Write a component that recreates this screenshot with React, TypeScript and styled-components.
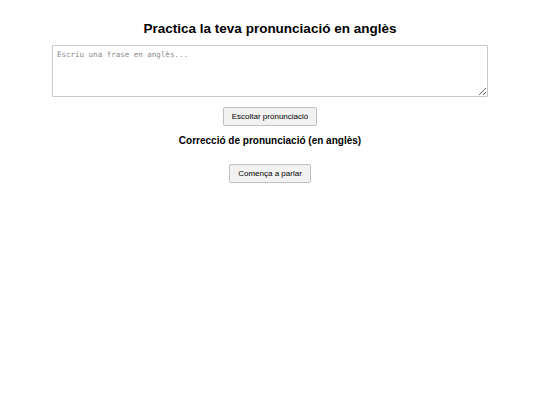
import React from 'react'
import styled, { createGlobalStyle } from 'styled-components'

const Global = createGlobalStyle`
  html, body {
    margin: 0;
    padding: 0;
    background: #fff;
  }
  body {
    font-family: "Liberation Sans", Arial, sans-serif;
    color: #000;
  }
`

const Page = styled.div`
  display: flex;
  flex-direction: column;
  align-items: center;
  padding-top: 20px;
`

const Title = styled.h1`
  margin: 0 0 8px;
  font-size: 13.5px;
  font-weight: 700;
  line-height: 17px;
`

const Input = styled.textarea`
  box-sizing: border-box;
  width: 436px;
  height: 52px;
  padding: 4px;
  border: 1px solid #c8c8c8;
  border-radius: 1px;
  font-family: "DejaVu Sans Mono", monospace;
  font-size: 7.5px;
  color: #000;
  outline: none;
  &::placeholder {
    color: #8a8a8a;
  }
`

const Button = styled.button<{ $top: number }>`
  margin-top: ${p => p.$top}px;
  padding: 0 8px;
  height: 19px;
  background: #f2f2f2;
  border: 1px solid #c0c0c0;
  border-radius: 2px;
  font-family: "Liberation Sans", Arial, sans-serif;
  font-size: 8px;
  color: #000;
`

const Subtitle = styled.h2`
  margin: 8px 0 0;
  font-size: 10px;
  font-weight: 700;
  line-height: 13px;
`

export default function App() {
  return (
    <>
      <Global />
      <Page>
        <Title>Practica la teva pronunciació en anglès</Title>
        <Input placeholder="Escriu una frase en anglès..." />
        <Button $top={10}>Escoltar pronunciació</Button>
        <Subtitle>Correcció de pronunciació (en anglès)</Subtitle>
        <Button $top={17}>Comença a parlar</Button>
      </Page>
    </>
  )
}
